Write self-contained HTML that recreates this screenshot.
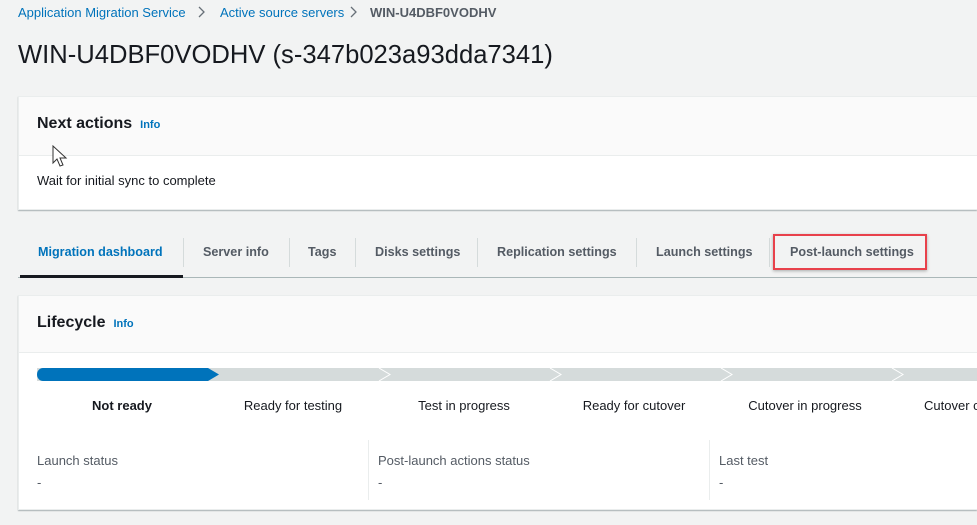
<!DOCTYPE html>
<html><head><style>
*{margin:0;padding:0;box-sizing:border-box}
body{width:977px;height:525px;overflow:hidden;background:#f2f3f3;font-family:"Liberation Sans",sans-serif;color:#16191f;position:relative}
.a{position:absolute;white-space:nowrap}
.bc{top:5px;font-size:13px;color:#0073bb}
.card{position:absolute;left:18px;width:959px;background:#fff;border:1px solid #eaeded;border-right:none;box-shadow:0 1px 1px rgba(0,28,36,.3);overflow:hidden}
.hd{background:#fafafa;border-bottom:1px solid #eaeded}
.info{font-size:11px;color:#0073bb;font-weight:bold;margin-left:8px}
.tab{top:245px;font-size:12.6px;font-weight:bold;color:#545b64}
.sep{position:absolute;top:238px;width:1px;height:29px;background:#d5dbdb}
.lbl{top:398px;font-size:13px;color:#16191f;transform:translateX(-50%)}
.k{top:453px;font-size:13px;color:#545b64}
.v{top:475px;font-size:13px;color:#545b64}
</style></head><body>
<div class="a bc" style="left:18px">Application Migration Service</div>
<svg class="a" style="left:198px;top:6px" width="8" height="12"><path d="M1 1 L6 6 L1 11" fill="none" stroke="#687078" stroke-width="1.3"/></svg>
<div class="a bc" style="left:220px">Active source servers</div>
<svg class="a" style="left:350px;top:6px" width="8" height="12"><path d="M1 1 L6 6 L1 11" fill="none" stroke="#687078" stroke-width="1.3"/></svg>
<div class="a bc" style="left:370px;color:#545b64;font-weight:bold">WIN-U4DBF0VODHV</div>
<div class="a" style="left:18px;top:41px;font-size:25.6px;color:#16191f">WIN-U4DBF0VODHV (s-347b023a93dda7341)</div>

<div class="card" style="top:96px;height:114px">
 <div class="hd" style="height:59px"></div>
</div>
<div class="a" style="left:37px;top:115px;font-size:16px;font-weight:bold">Next actions<span class="info">Info</span></div>
<svg class="a" style="left:52px;top:145px" width="18" height="24" viewBox="0 0 18 24"><path d="M1 1 L1 18 L5 14 L8 21 L11 20 L8 13 L14 13 Z" fill="#fff" stroke="#333" stroke-width="1"/></svg>
<div class="a" style="left:37px;top:173px;font-size:13px;color:#16191f">Wait for initial sync to complete</div>

<div class="a" style="left:18px;top:277px;width:959px;height:1px;background:#aab7b8"></div>
<div class="a" style="left:20px;top:275px;width:163px;height:3px;background:#16191f"></div>
<div class="a tab" style="left:38px;color:#0073bb">Migration dashboard</div>
<div class="sep" style="left:183px"></div>
<div class="a tab" style="left:203px">Server info</div>
<div class="sep" style="left:289px"></div>
<div class="a tab" style="left:308px">Tags</div>
<div class="sep" style="left:355px"></div>
<div class="a tab" style="left:375px">Disks settings</div>
<div class="sep" style="left:477px"></div>
<div class="a tab" style="left:497px">Replication settings</div>
<div class="sep" style="left:636px"></div>
<div class="a tab" style="left:656px">Launch settings</div>
<div class="sep" style="left:769px"></div>
<div class="a" style="left:773px;top:234px;width:154px;height:36px;border:2px solid #e8414b;box-shadow:0 1px 3px rgba(0,0,0,.3)"></div>
<div class="a tab" style="left:790px">Post-launch settings</div>

<div class="card" style="top:295px;height:215px">
 <div class="hd" style="height:57px"></div>
</div>
<div class="a" style="left:37px;top:314px;font-size:16px;font-weight:bold">Lifecycle<span class="info">Info</span></div>
<svg class="a" style="left:37px;top:368px" width="940" height="13">
 <rect x="0" y="0" width="940" height="13" fill="#d5dbdb"/>
 <path d="M6 0 H171 L182 6.5 L171 13 H6 A6 6.5 0 0 1 6 0Z" fill="#0073bb"/>
 <g fill="none" stroke="#fff" stroke-width="1"><path d="M342 0 L353 6.5 L342 13"/><path d="M513 0 L524 6.5 L513 13"/><path d="M684 0 L695 6.5 L684 13"/><path d="M855 0 L866 6.5 L855 13"/></g>
</svg>
<div class="a lbl" style="left:122px;font-weight:bold">Not ready</div>
<div class="a lbl" style="left:293px">Ready for testing</div>
<div class="a lbl" style="left:464px">Test in progress</div>
<div class="a lbl" style="left:634px">Ready for cutover</div>
<div class="a lbl" style="left:805px">Cutover in progress</div>
<div class="a" style="left:924px;top:398px;font-size:13px;width:53px;overflow:hidden">Cutover complete</div>
<div class="a" style="left:368px;top:440px;width:1px;height:60px;background:#eaeded"></div>
<div class="a" style="left:709px;top:440px;width:1px;height:60px;background:#eaeded"></div>
<div class="a k" style="left:37px">Launch status</div>
<div class="a v" style="left:37px">-</div>
<div class="a k" style="left:378px">Post-launch actions status</div>
<div class="a v" style="left:378px">-</div>
<div class="a k" style="left:719px">Last test</div>
<div class="a v" style="left:719px">-</div>
</body></html>
